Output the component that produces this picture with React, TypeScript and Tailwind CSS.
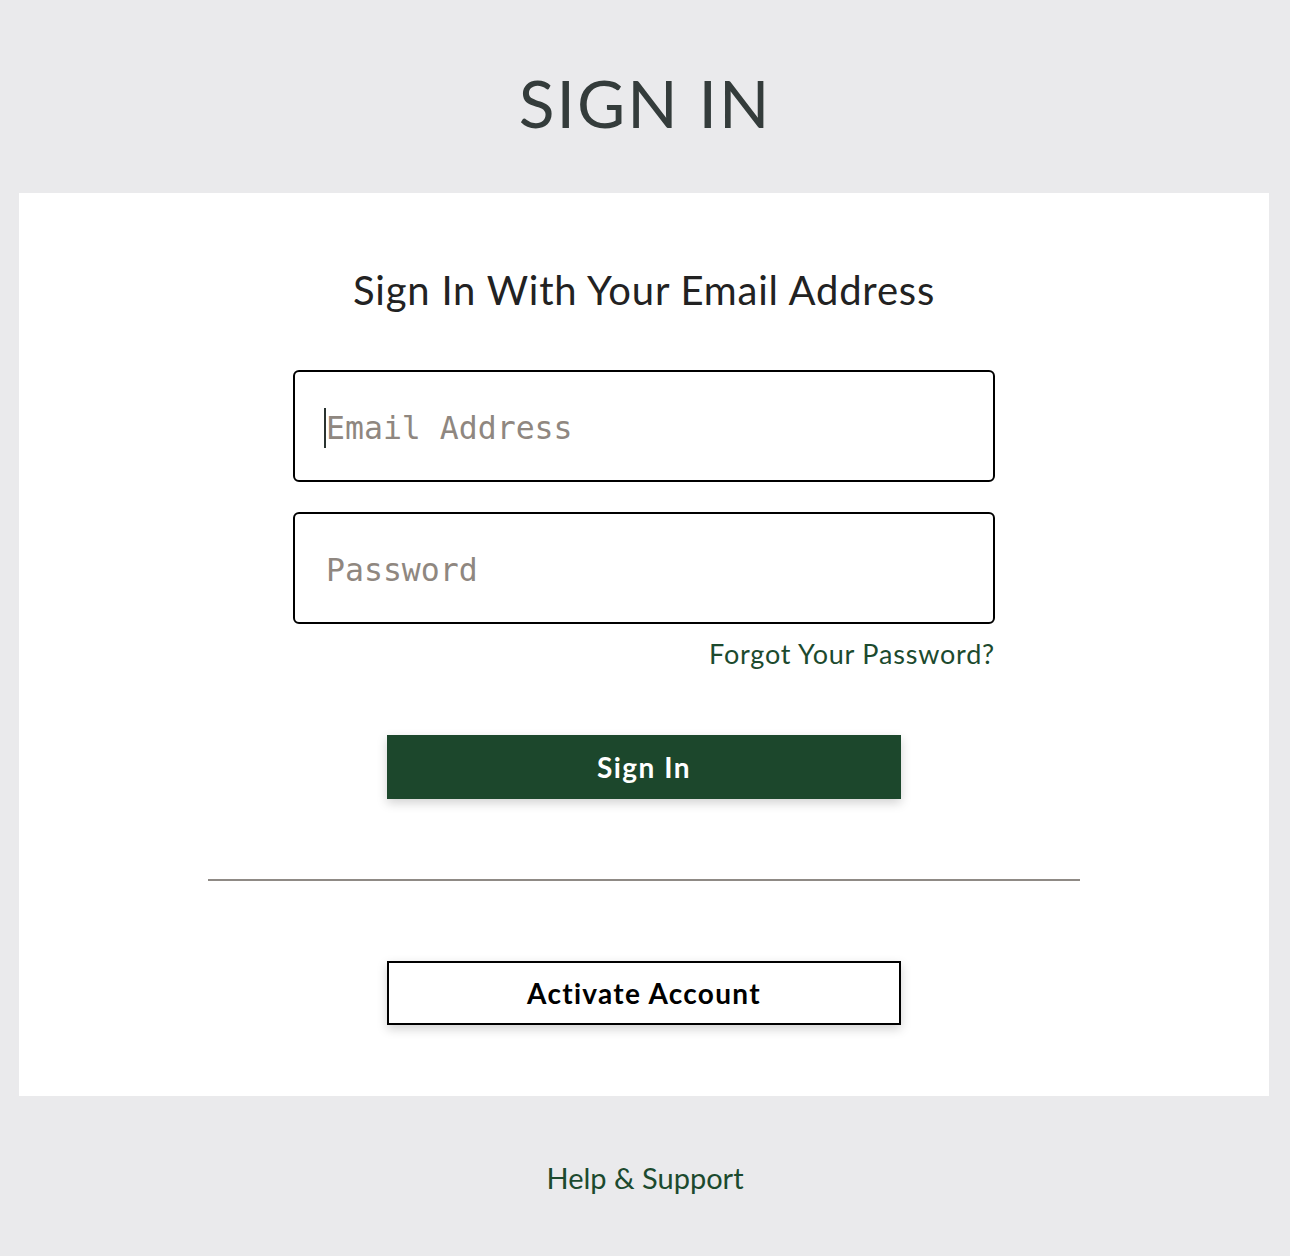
import React from "react";

export default function App() {
  return (
    <div className="min-h-[1256px] w-full bg-[#eaeaec] flex flex-col items-center" style={{ fontFamily: "Lato, 'Open Sans', sans-serif" }}>
      <div className="h-[193px] flex items-center justify-center pt-[12px]">
        <h1 className="text-[66px] leading-none text-[#343c3b] font-normal tracking-[2px]">SIGN IN</h1>
      </div>
      <div className="w-[1250px] h-[903px] bg-white flex flex-col items-center -translate-x-[1px]">
        <h2 className="mt-[74px] text-[40px] leading-[46px] text-[#222222] font-normal tracking-[0.8px]">Sign In With Your Email Address</h2>
        <div className="mt-[57px] w-[702px] flex flex-col gap-[30px]">
          <div className="h-[112px] border-2 border-black rounded-[6px] flex items-center pl-[29px] pt-[6px] relative">
            <span className="w-[2px] h-[40px] bg-[#2a3330] -mt-[2px]" />
            <span className="text-[31.5px] text-[#8f8780]" style={{ fontFamily: "'DejaVu Sans Mono', 'Liberation Mono', monospace" }}>Email Address</span>
          </div>
          <div className="h-[112px] border-2 border-black rounded-[6px] flex items-center pl-[31px] pt-[6px]">
            <span className="text-[31.5px] text-[#8f8780]" style={{ fontFamily: "'DejaVu Sans Mono', 'Liberation Mono', monospace" }}>Password</span>
          </div>
        </div>
        <div className="w-[702px] flex justify-end mt-[13px]">
          <a className="text-[27px] leading-[34px] text-[#1c4a2e] tracking-[0.8px]">Forgot Your Password?</a>
        </div>
        <button className="mt-[64px] w-[514px] h-[64px] bg-[#1c472c] text-white text-[28px] font-bold shadow-[0_4px_10px_rgba(0,0,0,0.18)] tracking-[1.5px]">Sign In</button>
        <div className="mt-[80px] w-[872px] h-[2px] bg-[#8f8a85]" />
        <button className="mt-[80px] w-[514px] h-[64px] bg-white border-2 border-black text-black text-[28px] font-bold shadow-[0_4px_10px_rgba(0,0,0,0.18)] tracking-[1.3px]">Activate Account</button>
      </div>
      <div className="h-[160px] flex items-start justify-center pt-[64px]">
        <a className="text-[29px] leading-[36px] text-[#1c4a2e]">Help &amp; Support</a>
      </div>
    </div>
  );
}
